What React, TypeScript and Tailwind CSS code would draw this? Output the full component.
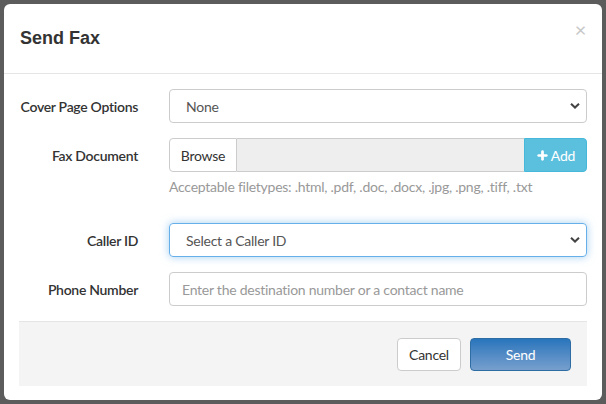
import { Plus } from 'lucide-react';

const body = { fontFamily: 'Lato, "Open Sans", sans-serif' };

function Chevron() {
  return (
    <svg width="10" height="7" viewBox="0 0 10 7" className="absolute right-[6px] top-1/2 -translate-y-1/2">
      <path d="M1 1.2 L5 5 L9 1.2" fill="none" stroke="#444" strokeWidth="2" />
    </svg>
  );
}

function Label({ children }: { children: string }) {
  return (
    <div className="flex w-[150px] shrink-0 justify-end whitespace-nowrap pr-[31px] text-[14px] font-semibold tracking-[-0.3px] text-[#333]">
      {children}
    </div>
  );
}

export default function App() {
  return (
    <div className="relative h-[404px] w-[606px] overflow-hidden bg-[#5c5c5c] p-[4px] tracking-[-0.25px]" style={body}>
      <div className="flex h-[396px] w-[598px] flex-col rounded-[6px] bg-white">
        <div className="relative flex h-[70px] items-center border-b border-[#e5e5e5] px-[16px]">
          <h4 className="text-[18px] font-bold tracking-normal text-[#333]" style={{ fontFamily: '"Liberation Sans", Arial, sans-serif' }}>
            Send Fax
          </h4>
          <span className="absolute right-[16px] top-[15px] text-[20px] leading-none text-[#c8c8c8]">×</span>
        </div>

        <div className="flex flex-col px-[15px] pt-[15px]">
          <div className="flex items-center">
            <Label>Cover Page Options</Label>
            <div className="relative flex h-[34px] flex-1 items-center rounded-[4px] border border-[#ccc] pl-[16px] text-[14px] text-[#555]">
              None
              <Chevron />
            </div>
          </div>

          <div className="mt-[15px] flex items-center">
            <Label>Fax Document</Label>
            <div className="flex h-[34px] flex-1 text-[14px]">
              <div className="flex w-[68px] items-center justify-center rounded-l-[4px] border border-[#ccc] bg-white text-[#333]">
                Browse
              </div>
              <div className="flex-1 border-y border-[#ccc] bg-[#eee]" />
              <div className="flex w-[63px] items-center justify-center gap-[2px] rounded-r-[4px] border border-[#46b8da] bg-[#5bc0de] text-white">
                <Plus size={13} strokeWidth={5} />
                Add
              </div>
            </div>
          </div>
          <div className="ml-[150px] mt-[5px] mb-[11px] text-[14px] leading-[20px] text-[#999]">
            Acceptable filetypes: .html, .pdf, .doc, .docx, .jpg, .png, .tiff, .txt
          </div>

          <div className="mt-[15px] flex items-center">
            <Label>Caller ID</Label>
            <div className="relative flex h-[34px] flex-1 items-center rounded-[4px] border border-[#66afe9] pl-[16px] text-[14px] text-[#555] shadow-[0_0_8px_rgba(102,175,233,0.6)]">
              Select a Caller ID
              <Chevron />
            </div>
          </div>

          <div className="mt-[15px] flex items-center">
            <Label>Phone Number</Label>
            <div className="flex h-[34px] flex-1 items-center rounded-[4px] border border-[#ccc] pl-[12px] text-[14px] text-[#999]">
              Enter the destination number or a contact name
            </div>
          </div>

          <div className="mt-[15px] flex h-[65px] items-center justify-end gap-[9px] border-t border-[#e5e5e5] bg-[#f4f4f4] pr-[16px] text-[14px]">
            <div className="flex h-[33px] w-[64px] items-center justify-center rounded-[4px] border border-[#ccc] bg-white text-[#333]">
              Cancel
            </div>
            <div className="flex h-[33px] w-[101px] items-center justify-center rounded-[4px] border border-[#2e6da4] bg-gradient-to-b from-[#2775bc] to-[#769fcd] text-white">
              Send
            </div>
          </div>
        </div>
      </div>
    </div>
  );
}
